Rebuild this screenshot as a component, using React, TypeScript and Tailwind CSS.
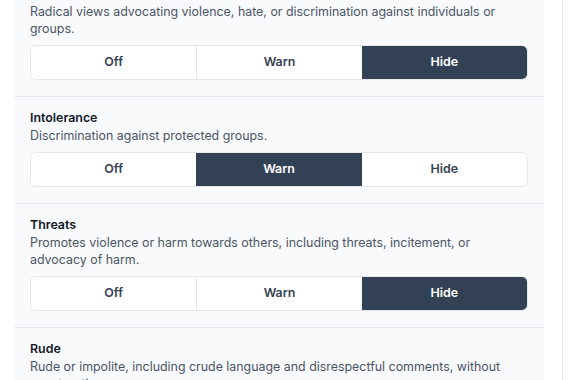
const sections = [
  {
    title: "Extremism",
    desc: "Radical views advocating violence, hate, or discrimination against individuals or groups.",
    value: "Hide",
  },
  {
    title: "Intolerance",
    desc: "Discrimination against protected groups.",
    value: "Warn",
  },
  {
    title: "Threats",
    desc: "Promotes violence or harm towards others, including threats, incitement, or advocacy of harm.",
    value: "Hide",
  },
  {
    title: "Rude",
    desc: "Rude or impolite, including crude language and disrespectful comments, without constructive purpose.",
    value: "Off",
  },
];

const options = ["Off", "Warn", "Hide"];

function Segmented({ value }: { value: string }) {
  return (
    <div className="mt-2 grid grid-cols-3 h-[35px] rounded-md border border-gray-200 bg-white overflow-hidden">
      {options.map((o, i) => {
        const active = o === value;
        return (
          <div
            key={o}
            className={
              "flex items-center justify-center text-[12.4px] font-semibold " +
              (active ? "bg-[#334155] text-white " : "text-gray-700 ") +
              (i > 0 && !active && options[i - 1] !== value ? "border-l border-gray-200" : "")
            }
          >
            {o}
          </div>
        );
      })}
    </div>
  );
}

export default function App() {
  return (
    <div className="w-[570px] h-[380px] overflow-hidden bg-white flex" style={{ fontFamily: "Inter, 'Noto Sans', sans-serif" }}>
      <div className="ml-[14px] w-[530px] bg-gray-50">
        <div className="-mt-[27px]">
          {sections.map((s) => (
            <div key={s.title} className="px-4 pt-3 pb-4 border-b border-gray-200">
              <div className="text-[12.4px] leading-[18px] font-semibold text-gray-900">{s.title}</div>
              <div className="text-[12.4px] leading-[17px] text-gray-600">{s.desc}</div>
              <Segmented value={s.value} />
            </div>
          ))}
        </div>
      </div>
      <div className="ml-[18px] w-px bg-gray-200" />
    </div>
  );
}
